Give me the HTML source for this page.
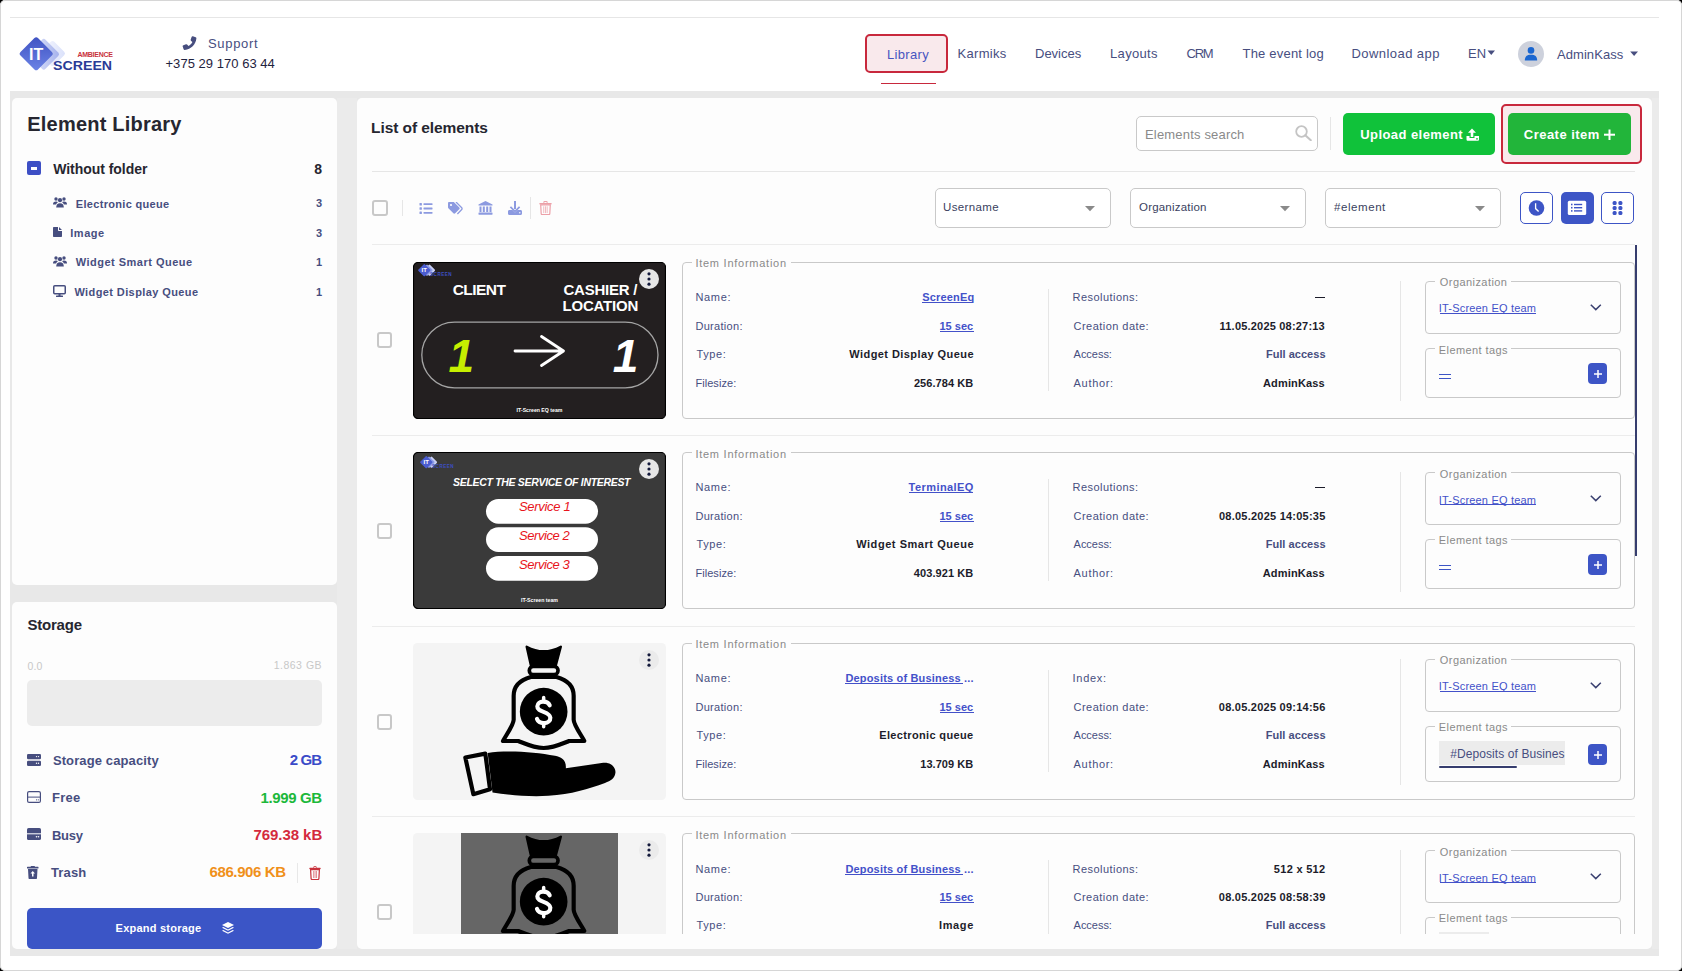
<!DOCTYPE html>
<html><head><meta charset="utf-8"><style>
html,body{margin:0;padding:0;width:1682px;height:971px;overflow:hidden;background:#000;}
#root{position:absolute;left:0;top:0;width:1682px;height:971px;border-radius:5px;background:#fff;overflow:hidden;font-family:"Liberation Sans",sans-serif;}
#frame{position:absolute;left:0;top:0;width:1682px;height:971px;box-sizing:border-box;border:1px solid #d6d6d6;border-radius:5px;z-index:100;}
</style></head><body><div id="root">
<div style='position:absolute;left:10px;top:17px;width:1649px;height:1px;background:#e6e6e6'></div><div style='position:absolute;left:10px;top:91px;width:1649px;height:865px;background:#e8e8e8'></div><div style='position:absolute;left:337px;top:98px;width:20px;height:851px;background:#ebebeb'></div><div style='position:absolute;left:1652px;top:98px;width:7px;height:851px;background:#ebebeb'></div><div style='position:absolute;left:12px;top:98px;width:325px;height:487px;background:#fdfdfd;border-radius:5px'></div><div style='position:absolute;left:12px;top:602px;width:325px;height:347px;background:#fdfdfd;border-radius:5px;overflow:hidden'></div><div style='position:absolute;left:357px;top:98px;width:1295px;height:851px;background:#fdfdfd;border-radius:5px'></div><svg style='position:absolute;left:19px;top:37px;' width='70' height='34' viewBox='0 0 70 34'>
<defs><linearGradient id='lg1' x1='0' y1='0' x2='1' y2='1'><stop offset='0' stop-color='#3f52c2'/><stop offset='1' stop-color='#6c84e6'/></linearGradient><linearGradient id='lg2' x1='1' y1='0' x2='0' y2='1'><stop offset='0' stop-color='#a3b0ec'/><stop offset='1' stop-color='#eef1fc'/></linearGradient><linearGradient id='lg3' x1='1' y1='0' x2='0' y2='1'><stop offset='0' stop-color='#d9e0fa'/><stop offset='1' stop-color='#fbfcff'/></linearGradient></defs>
<rect x='-9.5' y='-9.5' width='19' height='19' rx='2.5' transform='translate(33.5 16.5) rotate(45)' fill='url(#lg3)'/>
<rect x='-11.5' y='-11.5' width='23' height='23' rx='2.5' transform='translate(24.75 17.25) rotate(45)' fill='url(#lg2)'/>
<rect x='-12.35' y='-12.35' width='24.7' height='24.7' rx='2.5' transform='translate(17.2 16.75) rotate(45)' fill='url(#lg1)'/>
</svg><div style='position:absolute;left:29.00px;top:47px;white-space:pre;font:normal 700 16px/16px "Liberation Sans";color:#ffffff;letter-spacing:0.000px;'>IT</div><div style='position:absolute;left:77.50px;top:51px;white-space:pre;font:normal 700 7px/7px "Liberation Sans";color:#c8323c;letter-spacing:-0.286px;'>AMBIENCE</div><div style='position:absolute;left:52.50px;top:60px;white-space:pre;font:normal 700 12.5px/12.5px "Liberation Sans";color:#2a3b96;letter-spacing:0.000px;transform:scaleX(1.1346);transform-origin:0px 0;'>SCREEN</div><svg style='position:absolute;left:182px;top:36px;' width='15' height='14' viewBox='0 0 15 14'><path d='M13.2 1.2 L10.4 0.2 C9.8 0 9.3 0.3 9.1 0.9 L8.2 3.6 C8 4.1 8.2 4.7 8.6 5 L9.9 6 C9.1 7.8 7.7 9.2 5.9 10 L4.9 8.7 C4.6 8.3 4 8.1 3.5 8.3 L0.9 9.2 C0.3 9.4 0 9.9 0.2 10.5 L1.1 13.2 C1.3 13.7 1.8 14 2.3 13.9 C8.5 13.4 13.4 8.5 13.9 2.3 C14 1.8 13.7 1.3 13.2 1.2Z' fill='#474e7f' transform='translate(0.5 0) scale(1 1)'/></svg><div style='position:absolute;left:208.00px;top:37px;white-space:pre;font:normal 400 13px/13px "Liberation Sans";color:#474e7f;letter-spacing:0.667px;'>Support</div><div style='position:absolute;left:165.50px;top:57px;white-space:pre;font:normal 400 13px/13px "Liberation Sans";color:#1f2340;letter-spacing:0.031px;'>+375 29 170 63 44</div><div style='position:absolute;left:865px;top:34px;width:83px;height:39px;box-sizing:border-box;border:2px solid #c8283c;border-radius:5px;background:#f9e9ec'></div><div style='position:absolute;left:887.00px;top:48px;white-space:pre;font:normal 400 13px/13px "Liberation Sans";color:#4855c0;letter-spacing:0.333px;'>Library</div><div style='position:absolute;left:881px;top:83px;width:55px;height:1px;background:#c8283c'></div><div style='position:absolute;left:957.50px;top:47px;white-space:pre;font:normal 400 13px/13px "Liberation Sans";color:#474e7f;letter-spacing:0.300px;'>Karmiks</div><div style='position:absolute;left:1035.00px;top:47px;white-space:pre;font:normal 400 13px/13px "Liberation Sans";color:#474e7f;letter-spacing:0.000px;'>Devices</div><div style='position:absolute;left:1110.00px;top:47px;white-space:pre;font:normal 400 13px/13px "Liberation Sans";color:#474e7f;letter-spacing:0.333px;'>Layouts</div><div style='position:absolute;left:1186.50px;top:47px;white-space:pre;font:normal 400 13px/13px "Liberation Sans";color:#474e7f;letter-spacing:-1.250px;'>CRM</div><div style='position:absolute;left:1242.50px;top:47px;white-space:pre;font:normal 400 13px/13px "Liberation Sans";color:#474e7f;letter-spacing:0.208px;'>The event log</div><div style='position:absolute;left:1351.50px;top:47px;white-space:pre;font:normal 400 13px/13px "Liberation Sans";color:#474e7f;letter-spacing:0.436px;'>Download app</div><div style='position:absolute;left:1468.00px;top:47px;white-space:pre;font:normal 400 13px/13px "Liberation Sans";color:#474e7f;letter-spacing:0.000px;'>EN</div><svg style='position:absolute;left:1487px;top:50px;' width='9' height='6' viewBox='0 0 9 6'><path d='M0.5 0.5 L8 0.5 L4.25 5Z' fill='#474e7f'/></svg><div style='position:absolute;left:1518px;top:41px;width:26px;height:26px;background:#cdd1dc;border-radius:50%'></div><svg style='position:absolute;left:1524px;top:47px;' width='14' height='14' viewBox='0 0 14 14'><circle cx='7' cy='3.4' r='3.3' fill='#1a66d0'/><path d='M0.8 13.6 C0.8 9.5 3 7.8 7 7.8 C11 7.8 13.2 9.5 13.2 13.6Z' fill='#1a66d0'/></svg><div style='position:absolute;left:1557.00px;top:48px;white-space:pre;font:normal 400 13px/13px "Liberation Sans";color:#474e7f;letter-spacing:0.062px;'>AdminKass</div><svg style='position:absolute;left:1630px;top:51px;' width='9' height='6' viewBox='0 0 9 6'><path d='M0.2 0.5 L8 0.5 L4.1 5Z' fill='#474e7f'/></svg><div style='position:absolute;left:27.30px;top:114px;white-space:pre;font:normal 700 20px/20px "Liberation Sans";color:#262630;letter-spacing:0.214px;'>Element Library</div><div style='position:absolute;left:27px;top:161px;width:14px;height:14px;background:#3d4fc5;border-radius:2px'></div><div style='position:absolute;left:31px;top:166.5px;width:6px;height:3px;background:#fff'></div><div style='position:absolute;left:53.20px;top:162px;white-space:pre;font:normal 700 14px/14px "Liberation Sans";color:#262630;letter-spacing:-0.038px;'>Without folder</div><div style='position:absolute;left:314.30px;top:162px;white-space:pre;font:normal 700 14px/14px "Liberation Sans";color:#262630;letter-spacing:0.000px;'>8</div><svg style='position:absolute;left:53px;top:197px;' width='14' height='11' viewBox='0 0 14 11'><g fill='#474e7f'><circle cx='3' cy='2' r='1.7'/><circle cx='11' cy='2' r='1.7'/><circle cx='7' cy='3.2' r='2.1'/><path d='M0 7.4 C0 5.5 1 4.6 3 4.6 C4 4.6 4.6 4.9 5 5.3 C3.8 6 3.2 7 3.2 7.6Z'/><path d='M14 7.4 C14 5.5 13 4.6 11 4.6 C10 4.6 9.4 4.9 9 5.3 C10.2 6 10.8 7 10.8 7.6Z'/><path d='M3.2 10.5 C3.2 7.6 4.6 6.2 7 6.2 C9.4 6.2 10.8 7.6 10.8 10.5Z'/></g></svg><div style='position:absolute;left:75.80px;top:199px;white-space:pre;font:normal 700 11px/11px "Liberation Sans";color:#474e7f;letter-spacing:0.313px;'>Electronic queue</div><div style='position:absolute;left:316.00px;top:198px;white-space:pre;font:normal 700 11px/11px "Liberation Sans";color:#474e7f;letter-spacing:0.000px;'>3</div><svg style='position:absolute;left:53px;top:227px;' width='9' height='10' viewBox='0 0 9 10'><path d='M0 1 C0 0.4 0.4 0 1 0 L5 0 L5 3 C5 3.6 5.4 4 6 4 L9 4 L9 9 C9 9.6 8.6 10 8 10 L1 10 C0.4 10 0 9.6 0 9Z M6 0 L9 3 L6 3Z' fill='#474e7f'/></svg><div style='position:absolute;left:70.30px;top:228px;white-space:pre;font:normal 700 11px/11px "Liberation Sans";color:#474e7f;letter-spacing:0.500px;'>Image</div><div style='position:absolute;left:316.00px;top:228px;white-space:pre;font:normal 700 11px/11px "Liberation Sans";color:#474e7f;letter-spacing:0.000px;'>3</div><svg style='position:absolute;left:53px;top:256px;' width='14' height='11' viewBox='0 0 14 11'><g fill='#474e7f'><circle cx='3' cy='2' r='1.7'/><circle cx='11' cy='2' r='1.7'/><circle cx='7' cy='3.2' r='2.1'/><path d='M0 7.4 C0 5.5 1 4.6 3 4.6 C4 4.6 4.6 4.9 5 5.3 C3.8 6 3.2 7 3.2 7.6Z'/><path d='M14 7.4 C14 5.5 13 4.6 11 4.6 C10 4.6 9.4 4.9 9 5.3 C10.2 6 10.8 7 10.8 7.6Z'/><path d='M3.2 10.5 C3.2 7.6 4.6 6.2 7 6.2 C9.4 6.2 10.8 7.6 10.8 10.5Z'/></g></svg><div style='position:absolute;left:75.80px;top:257px;white-space:pre;font:normal 700 11px/11px "Liberation Sans";color:#474e7f;letter-spacing:0.482px;'>Widget Smart Queue</div><div style='position:absolute;left:316.00px;top:257px;white-space:pre;font:normal 700 11px/11px "Liberation Sans";color:#474e7f;letter-spacing:0.000px;'>1</div><svg style='position:absolute;left:53px;top:285px;' width='13' height='12' viewBox='0 0 13 12'><rect x='0.75' y='0.75' width='11.5' height='8' rx='1' fill='none' stroke='#474e7f' stroke-width='1.5'/><rect x='5.5' y='9' width='2' height='2' fill='#474e7f'/><rect x='3' y='10.5' width='7' height='1.5' rx='0.5' fill='#474e7f'/></svg><div style='position:absolute;left:74.40px;top:287px;white-space:pre;font:normal 700 11px/11px "Liberation Sans";color:#474e7f;letter-spacing:0.400px;'>Widget Display Queue</div><div style='position:absolute;left:316.00px;top:287px;white-space:pre;font:normal 700 11px/11px "Liberation Sans";color:#474e7f;letter-spacing:0.000px;'>1</div><div style='position:absolute;left:27.40px;top:617px;white-space:pre;font:normal 700 15px/15px "Liberation Sans";color:#262630;letter-spacing:-0.200px;'>Storage</div><div style='position:absolute;left:27.40px;top:661px;white-space:pre;font:normal 400 10.5px/10.5px "Liberation Sans";color:#c8c8c8;letter-spacing:0.200px;'>0.0</div><div style='position:absolute;left:273.70px;top:660px;white-space:pre;font:normal 400 10.5px/10.5px "Liberation Sans";color:#c8c8c8;letter-spacing:0.500px;'>1.863 GB</div><div style='position:absolute;left:27px;top:680px;width:295px;height:46px;background:#ececec;border-radius:5px'></div><svg style='position:absolute;left:27px;top:754px;' width='14' height='12' viewBox='0 0 14 12'><rect x='0' y='0' width='14' height='5.3' rx='1.3' fill='#474e7f'/><rect x='0' y='6.7' width='14' height='5.3' rx='1.3' fill='#474e7f'/><circle cx='9.5' cy='2.6' r='0.7' fill='#fff'/><circle cx='11.5' cy='2.6' r='0.7' fill='#fff'/><circle cx='9.5' cy='9.3' r='0.7' fill='#fff'/><circle cx='11.5' cy='9.3' r='0.7' fill='#fff'/></svg><div style='position:absolute;left:52.90px;top:754px;white-space:pre;font:normal 700 13px/13px "Liberation Sans";color:#474e7f;letter-spacing:0.113px;'>Storage capacity</div><div style='position:absolute;left:289.80px;top:752px;white-space:pre;font:normal 700 15px/15px "Liberation Sans";color:#3a4bc8;letter-spacing:-0.933px;'>2 GB</div><svg style='position:absolute;left:27px;top:791px;' width='14' height='12' viewBox='0 0 14 12'><rect x='0.6' y='0.6' width='12.8' height='10.8' rx='1.5' fill='none' stroke='#474e7f' stroke-width='1.2'/><rect x='0.6' y='5.6' width='12.8' height='1' fill='#474e7f'/><circle cx='9.5' cy='8.8' r='0.6' fill='#474e7f'/><circle cx='11.3' cy='8.8' r='0.6' fill='#474e7f'/></svg><div style='position:absolute;left:52.00px;top:791px;white-space:pre;font:normal 700 13px/13px "Liberation Sans";color:#474e7f;letter-spacing:0.267px;'>Free</div><div style='position:absolute;left:260.40px;top:790px;white-space:pre;font:normal 700 15px/15px "Liberation Sans";color:#1cb83a;letter-spacing:-0.343px;'>1.999 GB</div><svg style='position:absolute;left:27px;top:828px;' width='14' height='12' viewBox='0 0 14 12'><rect x='0' y='0' width='14' height='12' rx='1.6' fill='#474e7f'/><rect x='0' y='5.3' width='14' height='1' fill='#fff'/><circle cx='9.5' cy='8.8' r='0.8' fill='#fff'/><circle cx='11.5' cy='8.8' r='0.8' fill='#fff'/></svg><div style='position:absolute;left:52.00px;top:829px;white-space:pre;font:normal 700 13px/13px "Liberation Sans";color:#474e7f;letter-spacing:-0.300px;'>Busy</div><div style='position:absolute;left:253.50px;top:827px;white-space:pre;font:normal 700 15px/15px "Liberation Sans";color:#d42a3c;letter-spacing:-0.062px;'>769.38 kB</div><svg style='position:absolute;left:27px;top:866px;' width='12' height='13' viewBox='0 0 12 13'><rect x='0' y='0.8' width='11.5' height='1.6' rx='0.5' fill='#474e7f'/><rect x='3.8' y='0' width='4' height='1.2' fill='#474e7f'/><path d='M1 3 L10.5 3 L10 12 C10 12.6 9.6 13 9 13 L2.5 13 C1.9 13 1.5 12.6 1.5 12Z' fill='#474e7f'/><path d='M5.75 5 L8 7.5 L6.5 7.5 L6.5 10.5 L5 10.5 L5 7.5 L3.5 7.5Z' fill='#fff'/></svg><div style='position:absolute;left:51.00px;top:866px;white-space:pre;font:normal 700 13px/13px "Liberation Sans";color:#474e7f;letter-spacing:0.150px;'>Trash</div><div style='position:absolute;left:209.50px;top:864px;white-space:pre;font:normal 700 15px/15px "Liberation Sans";color:#f0901a;letter-spacing:-0.389px;'>686.906 KB</div><div style='position:absolute;left:297px;top:863px;width:1px;height:20px;background:#e8e8e8'></div><svg style='position:absolute;left:309px;top:866px;' width='12' height='14' viewBox='0 0 12 14'><path d='M4.5 1.5 C4.5 0.8 5 0.5 5.5 0.5 L6.5 0.5 C7 0.5 7.5 0.8 7.5 1.5' fill='none' stroke='#c8323c' stroke-width='1'/><rect x='0.3' y='1.8' width='11.4' height='1.4' rx='0.6' fill='#c8323c'/><path d='M1.6 3.6 L10.4 3.6 L9.9 12.6 C9.85 13.2 9.4 13.5 8.9 13.5 L3.1 13.5 C2.6 13.5 2.15 13.2 2.1 12.6Z' fill='none' stroke='#c8323c' stroke-width='1.2'/><rect x='4.2' y='5' width='0.9' height='7' fill='#e08890'/><rect x='5.6' y='5' width='0.9' height='7' fill='#e08890'/><rect x='7' y='5' width='0.9' height='7' fill='#e08890'/></svg><div style='position:absolute;left:27px;top:908px;width:295px;height:41px;background:#3b55c6;border-radius:5px'></div><div style='position:absolute;left:115.60px;top:923px;white-space:pre;font:normal 700 11px/11px "Liberation Sans";color:#ffffff;letter-spacing:0.231px;'>Expand storage</div><svg style='position:absolute;left:222px;top:922px;' width='12' height='12' viewBox='0 0 12 12'><path d='M6 0 L12 3 L6 6 L0 3Z' fill='#fff'/><path d='M1.3 5 L6 7.4 L10.7 5 L12 5.8 L6 8.8 L0 5.8Z' fill='#fff'/><path d='M1.3 8 L6 10.4 L10.7 8 L12 8.8 L6 11.8 L0 8.8Z' fill='#fff'/></svg><div style='position:absolute;left:371.10px;top:120px;white-space:pre;font:normal 700 15.5px/15.5px "Liberation Sans";color:#262630;letter-spacing:-0.080px;'>List of elements</div><div style='position:absolute;left:372px;top:171px;width:1263px;height:1px;background:#e6e6e6'></div><div style='position:absolute;left:1136px;top:116px;width:182px;height:35px;box-sizing:border-box;border:1px solid #c9c9c9;border-radius:5px;background:#fff'></div><div style='position:absolute;left:1145.00px;top:128px;white-space:pre;font:normal 400 13px/13px "Liberation Sans";color:#8a8a8a;letter-spacing:0.179px;'>Elements search</div><svg style='position:absolute;left:1295px;top:125px;' width='17' height='16' viewBox='0 0 17 16'><circle cx='6.5' cy='6.5' r='5.3' fill='none' stroke='#c4c4c4' stroke-width='1.8'/><path d='M10.3 10.3 L15.8 15.3' stroke='#c4c4c4' stroke-width='2' stroke-linecap='round'/></svg><div style='position:absolute;left:1330px;top:117px;width:1px;height:33px;background:#e6e6e6'></div><div style='position:absolute;left:1343px;top:113px;width:152px;height:42px;background:#10c23a;border-radius:5px'></div><div style='position:absolute;left:1360.20px;top:128px;white-space:pre;font:normal 700 13px/13px "Liberation Sans";color:#ffffff;letter-spacing:0.438px;'>Upload element</div><svg style='position:absolute;left:1466px;top:128px;' width='14' height='13' viewBox='0 0 14 13'><path d='M6 0.5 L10 4.8 L7.3 4.8 L7.3 9 L4.7 9 L4.7 4.8 L2 4.8Z' fill='#fff'/><path d='M0.5 8 L3.5 8 L3.5 10 L8.5 10 L8.5 8 L13 8 L13 11.5 C13 12.3 12.4 12.8 11.7 12.8 L1.8 12.8 C1.1 12.8 0.5 12.3 0.5 11.5Z' fill='#fff'/><circle cx='11' cy='10.8' r='0.9' fill='#10c23a'/></svg><div style='position:absolute;left:1501px;top:104px;width:141px;height:60px;box-sizing:border-box;border:2px solid #c8283c;border-radius:5px;background:#f9e9ec'></div><div style='position:absolute;left:1508px;top:113px;width:123px;height:42px;background:#22b53a;border-radius:5px'></div><div style='position:absolute;left:1523.80px;top:128px;white-space:pre;font:normal 700 13px/13px "Liberation Sans";color:#ffffff;letter-spacing:0.470px;'>Create item</div><svg style='position:absolute;left:1604px;top:129px;' width='11' height='11' viewBox='0 0 11 11'><rect x='4.5' y='0.5' width='2' height='10.5' fill='#fff'/><rect x='0' y='4.7' width='11' height='2' fill='#fff'/></svg><div style='position:absolute;left:372px;top:200px;width:15.5px;height:15.5px;box-sizing:border-box;border:2px solid #c8c8c8;border-radius:3px'></div><div style='position:absolute;left:402px;top:200px;width:1px;height:16px;background:#e6e6e6'></div><svg style='position:absolute;left:419px;top:203px;' width='14' height='11' viewBox='0 0 14 11'><g fill='#8c9ae0'><rect x='0.5' y='0' width='2.4' height='2.4' rx='0.5'/><rect x='0.5' y='4.3' width='2.4' height='2.4' rx='0.5'/><rect x='0.5' y='8.6' width='2.4' height='2.4' rx='0.5'/><rect x='4.5' y='0.3' width='9' height='1.8' rx='0.4'/><rect x='4.5' y='4.6' width='9' height='1.8' rx='0.4'/><rect x='4.5' y='8.9' width='9' height='1.8' rx='0.4'/></g></svg><svg style='position:absolute;left:448px;top:202px;' width='15' height='13' viewBox='0 0 15 13'><path d='M0 1.2 C0 0.5 0.5 0 1.2 0 L5.3 0 C5.7 0 6 0.1 6.3 0.4 L11.3 5.4 C11.8 5.9 11.8 6.7 11.3 7.2 L7.2 11.3 C6.7 11.8 5.9 11.8 5.4 11.3 L0.4 6.3 C0.1 6 0 5.7 0 5.3Z' fill='#8c9ae0'/><circle cx='3' cy='3' r='1.1' fill='#fff'/><path d='M8 0 L13.5 5.5 C14.3 6.3 14.3 7 13.5 7.8 L9.4 12' fill='none' stroke='#8c9ae0' stroke-width='1.3'/></svg><svg style='position:absolute;left:478px;top:201px;' width='15' height='14' viewBox='0 0 15 14'><g fill='#8c9ae0'><path d='M7.5 0 L14.5 3.5 L14.5 4.5 L0.5 4.5 L0.5 3.5Z'/><rect x='1.5' y='5.5' width='2' height='5.5'/><rect x='4.8' y='5.5' width='2' height='5.5'/><rect x='8.2' y='5.5' width='2' height='5.5'/><rect x='11.5' y='5.5' width='2' height='5.5'/><rect x='0.5' y='11.5' width='14' height='2.2' rx='0.4'/></g></svg><svg style='position:absolute;left:508px;top:201px;' width='14' height='14' viewBox='0 0 14 14'><g fill='#8c9ae0'><rect x='6' y='0' width='2' height='8'/><path d='M3 5.3 L7 9.3 L11 5.3 L12.2 6.5 L7 11.5 L1.8 6.5Z'/><path d='M0 10.5 C0 9.7 0.6 9 1.4 9 L4.5 9 L7 11.5 L9.5 9 L12.6 9 C13.4 9 14 9.7 14 10.5 L14 12.5 C14 13.3 13.4 14 12.6 14 L1.4 14 C0.6 14 0 13.3 0 12.5Z'/></g><circle cx='11.8' cy='11.8' r='0.7' fill='#fff'/></svg><div style='position:absolute;left:530px;top:197px;width:1px;height:22px;background:#e6e6e6'></div><svg style='position:absolute;left:539px;top:201px;' width='13' height='14' viewBox='0 0 13 14'><path d='M4.7 1.8 C4.7 0.9 5.3 0.5 6 0.5 L7 0.5 C7.7 0.5 8.3 0.9 8.3 1.8' fill='none' stroke='#eca0a8' stroke-width='1.1'/><rect x='0.3' y='1.9' width='12.4' height='1.5' rx='0.6' fill='#eca0a8'/><path d='M1.7 3.8 L11.3 3.8 L10.8 12.8 C10.75 13.4 10.3 13.6 9.8 13.6 L3.2 13.6 C2.7 13.6 2.25 13.4 2.2 12.8Z' fill='none' stroke='#eca0a8' stroke-width='1.2'/><g fill='#f0b4ba'><rect x='4.3' y='5.3' width='0.9' height='6.8'/><rect x='6' y='5.3' width='0.9' height='6.8'/><rect x='7.7' y='5.3' width='0.9' height='6.8'/></g></svg><div style='position:absolute;left:935px;top:188px;width:176px;height:40px;box-sizing:border-box;border:1px solid #c9c9c9;border-radius:5px;background:#fff'></div><div style='position:absolute;left:943.00px;top:202px;white-space:pre;font:normal 400 11.5px/11.5px "Liberation Sans";color:#3a3f60;letter-spacing:0.357px;'>Username</div><svg style='position:absolute;left:1085px;top:206px;' width='10' height='6' viewBox='0 0 10 6'><path d='M0 0 L10 0 L5 5.3Z' fill='#8a8a8a'/></svg><div style='position:absolute;left:1130px;top:188px;width:176px;height:40px;box-sizing:border-box;border:1px solid #c9c9c9;border-radius:5px;background:#fff'></div><div style='position:absolute;left:1139.00px;top:202px;white-space:pre;font:normal 400 11.5px/11.5px "Liberation Sans";color:#3a3f60;letter-spacing:0.200px;'>Organization</div><svg style='position:absolute;left:1280px;top:206px;' width='10' height='6' viewBox='0 0 10 6'><path d='M0 0 L10 0 L5 5.3Z' fill='#8a8a8a'/></svg><div style='position:absolute;left:1325px;top:188px;width:176px;height:40px;box-sizing:border-box;border:1px solid #c9c9c9;border-radius:5px;background:#fff'></div><div style='position:absolute;left:1334.00px;top:202px;white-space:pre;font:normal 400 11.5px/11.5px "Liberation Sans";color:#3a3f60;letter-spacing:0.571px;'>#element</div><svg style='position:absolute;left:1475px;top:206px;' width='10' height='6' viewBox='0 0 10 6'><path d='M0 0 L10 0 L5 5.3Z' fill='#8a8a8a'/></svg><div style='position:absolute;left:1520px;top:192px;width:33px;height:32px;box-sizing:border-box;border:1px solid #3d55c6;border-radius:5px;background:#fff'></div><svg style='position:absolute;left:1528px;top:200px;' width='17' height='17' viewBox='0 0 17 17'><circle cx='8.5' cy='8' r='7.8' fill='#3d55c6'/><path d='M7.6 3.3 L7.6 8.6 L10.6 11.4' fill='none' stroke='#fff' stroke-width='1.3'/></svg><div style='position:absolute;left:1561px;top:192px;width:33px;height:32px;background:#3d55c6;border-radius:5px'></div><svg style='position:absolute;left:1567px;top:200px;' width='20' height='16' viewBox='0 0 20 16'><rect x='0.8' y='0.8' width='18.4' height='14.2' rx='1.6' fill='#fff'/><g fill='#3d55c6'><rect x='4' y='3.7' width='1.5' height='1.6'/><rect x='4' y='6.9' width='1.5' height='1.6'/><rect x='4' y='10.1' width='1.5' height='1.6'/><rect x='7' y='3.8' width='8.2' height='1.4'/><rect x='7' y='7' width='8.2' height='1.4'/><rect x='7' y='10.2' width='8.2' height='1.4'/></g></svg><div style='position:absolute;left:1601px;top:192px;width:33px;height:32px;box-sizing:border-box;border:1px solid #3d55c6;border-radius:5px;background:#fff'></div><svg style='position:absolute;left:1612px;top:200px;' width='12' height='16' viewBox='0 0 12 16'><g fill='#3d55c6'><rect x='0.6' y='0.9' width='4' height='4' rx='1.5'/><rect x='6.4' y='0.9' width='4' height='4' rx='1.5'/><rect x='0.6' y='5.9' width='4' height='4' rx='1.5'/><rect x='6.4' y='5.9' width='4' height='4' rx='1.5'/><rect x='0.6' y='10.9' width='4' height='4' rx='1.5'/><rect x='6.4' y='10.9' width='4' height='4' rx='1.5'/></g></svg><div style='position:absolute;left:372px;top:244px;width:1263px;height:1px;background:#ececec'></div><div style='position:absolute;left:1635px;top:245px;width:2px;height:311px;background:#363d6e'></div><div style='position:absolute;left:0;top:0;width:1682px;height:971px;clip-path:inset(244px 0 37px 0)'><svg style='position:absolute;left:413px;top:262px;' width='253' height='157' viewBox='0 0 253 157'><rect x='0.5' y='0.5' width='252' height='156' rx='4.5' fill='#231f20' stroke='#000' stroke-width='1.2'/>
<rect x='8.8' y='60.2' width='236.2' height='65.6' rx='32.8' fill='none' stroke='#a5a5a5' stroke-width='1.3'/>
<path d='M102 89 L150 89 M128.5 74.5 L150.5 89 L128.5 103.5' fill='none' stroke='#fff' stroke-width='2.8' stroke-linecap='round' stroke-linejoin='round'/>
<text x='126.5' y='150' text-anchor='middle' font-family='Liberation Sans' font-weight='700' font-size='5.2' fill='#fff'>IT-Screen EQ team</text></svg><svg style='position:absolute;left:418px;top:264px;' width='36' height='13' viewBox='0 0 36 13'><rect x='-4.2' y='-4.2' width='8.4' height='8.4' rx='1' transform='translate(11.5 6.2) rotate(45)' fill='#c9d0f5'/><rect x='-4.2' y='-4.2' width='8.4' height='8.4' rx='1' transform='translate(9 6.2) rotate(45)' fill='#8d9ce6'/><rect x='-4.6' y='-4.6' width='9.2' height='9.2' rx='1' transform='translate(6.3 6.2) rotate(45)' fill='#4a5cd0'/><text x='3.6' y='8.2' font-family='Liberation Sans' font-weight='700' font-size='6' fill='#fff'>IT</text><text x='12' y='11.5' font-family='Liberation Sans' font-weight='700' font-size='4.6' fill='#3d4fc0' letter-spacing='0.5'>SCREEN</text></svg><div style='position:absolute;left:452.70px;top:282px;white-space:pre;font:normal 700 15.5px/15.5px "Liberation Sans";color:#ffffff;letter-spacing:-0.560px;'>CLIENT</div><div style='position:absolute;left:563.50px;top:282px;white-space:pre;font:normal 700 15px/15px "Liberation Sans";color:#ffffff;letter-spacing:-0.238px;'>CASHIER /</div><div style='position:absolute;left:562.50px;top:298px;white-space:pre;font:normal 700 15px/15px "Liberation Sans";color:#ffffff;letter-spacing:-0.214px;'>LOCATION</div><div style='position:absolute;left:448.60px;top:333px;white-space:pre;font:italic 700 46px/46px "Liberation Sans";color:#c6ef00;letter-spacing:0.000px;'>1</div><div style='position:absolute;left:612.70px;top:333px;white-space:pre;font:italic 700 46px/46px "Liberation Sans";color:#ffffff;letter-spacing:0.000px;'>1</div><svg style='position:absolute;left:639px;top:268.7px;' width='20' height='20' viewBox='0 0 20 20'><circle cx='10' cy='10' r='10' fill='#e6e6e6'/><g fill='#141a3c'><circle cx='10' cy='4.8' r='1.6'/><circle cx='10' cy='10' r='1.6'/><circle cx='10' cy='15.2' r='1.6'/></g></svg><svg style='position:absolute;left:413px;top:452px;' width='253' height='157' viewBox='0 0 253 157'><rect x='0.5' y='0.5' width='252' height='156' rx='4.5' fill='#3a3a3a' stroke='#000' stroke-width='1.2'/>
<rect x='73' y='47' width='112' height='24.7' rx='12.35' fill='#fff'/>
<rect x='73' y='75.2' width='112' height='24.7' rx='12.35' fill='#fff'/>
<rect x='73' y='104' width='112' height='24.7' rx='12.35' fill='#fff'/>
<text x='126.5' y='150' text-anchor='middle' font-family='Liberation Sans' font-weight='700' font-size='5.2' fill='#fff'>IT-Screen team</text></svg><svg style='position:absolute;left:420px;top:456px;' width='36' height='13' viewBox='0 0 36 13'><rect x='-4.2' y='-4.2' width='8.4' height='8.4' rx='1' transform='translate(11.5 6.2) rotate(45)' fill='#c9d0f5'/><rect x='-4.2' y='-4.2' width='8.4' height='8.4' rx='1' transform='translate(9 6.2) rotate(45)' fill='#8d9ce6'/><rect x='-4.6' y='-4.6' width='9.2' height='9.2' rx='1' transform='translate(6.3 6.2) rotate(45)' fill='#4a5cd0'/><text x='3.6' y='8.2' font-family='Liberation Sans' font-weight='700' font-size='6' fill='#fff'>IT</text><text x='12' y='11.5' font-family='Liberation Sans' font-weight='700' font-size='4.6' fill='#3d4fc0' letter-spacing='0.5'>SCREEN</text></svg><div style='position:absolute;left:453.10px;top:477px;white-space:pre;font:italic 700 10.5px/10.5px "Liberation Sans";color:#ffffff;letter-spacing:-0.321px;'>SELECT THE SERVICE OF INTEREST</div><div style='position:absolute;left:519.00px;top:500px;white-space:pre;font:italic 400 13px/13px "Liberation Sans";color:#e8141c;letter-spacing:-0.300px;'>Service 1</div><div style='position:absolute;left:519.00px;top:529px;white-space:pre;font:italic 400 13px/13px "Liberation Sans";color:#e8141c;letter-spacing:-0.425px;'>Service 2</div><div style='position:absolute;left:519.00px;top:558px;white-space:pre;font:italic 400 13px/13px "Liberation Sans";color:#e8141c;letter-spacing:-0.425px;'>Service 3</div><svg style='position:absolute;left:639px;top:458.7px;' width='20' height='20' viewBox='0 0 20 20'><circle cx='10' cy='10' r='10' fill='#e6e6e6'/><g fill='#141a3c'><circle cx='10' cy='4.8' r='1.6'/><circle cx='10' cy='10' r='1.6'/><circle cx='10' cy='15.2' r='1.6'/></g></svg><svg style='position:absolute;left:413px;top:643px;' width='253' height='157' viewBox='0 0 253 157'><rect x='0' y='0' width='253' height='157' rx='4.5' fill='#f4f4f4'/><g transform='translate(42 -3) scale(0.166667)'>
<path d='M430 40 Q532 95 635 40 L605 152 L455 152Z' fill='#000' stroke='#000' stroke-width='14' stroke-linejoin='round'/>
<rect x='446' y='158' width='172' height='50' rx='24' fill='none' stroke='#000' stroke-width='22'/>
<path d='M455 222 C390 240 352 280 352 335 L352 478 C352 510 300 580 288 606 L380 606 C440 630 480 648 532 648 C584 648 624 630 684 606 L776 606 C764 580 712 510 712 478 L712 335 C712 280 674 240 609 222Z' fill='none' stroke='#000' stroke-width='25' stroke-linejoin='round'/>
<circle cx='532' cy='430' r='143' fill='#000'/>
<path d='M568 392 C556 362 496 360 494 398 C492 436 570 426 572 466 C574 506 506 510 492 474' fill='none' stroke='#fff' stroke-width='25' stroke-linecap='round'/>
<path d='M532 345 L532 362 M532 505 L532 520' stroke='#fff' stroke-width='21' stroke-linecap='round'/>
<path d='M62 705 L182 682 L210 895 L110 925Z' fill='none' stroke='#000' stroke-width='25' stroke-linejoin='round'/>
<path d='M196 678 C300 660 480 670 600 695 C650 705 668 730 665 770 L880 738 C940 728 968 770 962 800 C958 830 935 845 900 858 C800 895 700 925 560 935 C440 942 320 930 225 915Z' fill='#000'/>
</g></svg><svg style='position:absolute;left:639px;top:649.5px;' width='20' height='20' viewBox='0 0 20 20'><circle cx='10' cy='10' r='10' fill='#ebebeb'/><g fill='#141a3c'><circle cx='10' cy='4.8' r='1.6'/><circle cx='10' cy='10' r='1.6'/><circle cx='10' cy='15.2' r='1.6'/></g></svg><svg style='position:absolute;left:413px;top:833px;' width='253' height='157' viewBox='0 0 253 157'><rect x='0' y='0' width='253' height='157' rx='4.5' fill='#f4f4f4'/><rect x='48' y='0' width='157' height='157' fill='#666'/><g transform='translate(42 -3) scale(0.166667)'>
<path d='M430 40 Q532 95 635 40 L605 152 L455 152Z' fill='#000' stroke='#000' stroke-width='14' stroke-linejoin='round'/>
<rect x='446' y='158' width='172' height='50' rx='24' fill='none' stroke='#000' stroke-width='22'/>
<path d='M455 222 C390 240 352 280 352 335 L352 478 C352 510 300 580 288 606 L380 606 C440 630 480 648 532 648 C584 648 624 630 684 606 L776 606 C764 580 712 510 712 478 L712 335 C712 280 674 240 609 222Z' fill='none' stroke='#000' stroke-width='25' stroke-linejoin='round'/>
<circle cx='532' cy='430' r='143' fill='#000'/>
<path d='M568 392 C556 362 496 360 494 398 C492 436 570 426 572 466 C574 506 506 510 492 474' fill='none' stroke='#fff' stroke-width='25' stroke-linecap='round'/>
<path d='M532 345 L532 362 M532 505 L532 520' stroke='#fff' stroke-width='21' stroke-linecap='round'/>
<path d='M62 705 L182 682 L210 895 L110 925Z' fill='none' stroke='#000' stroke-width='25' stroke-linejoin='round'/>
<path d='M196 678 C300 660 480 670 600 695 C650 705 668 730 665 770 L880 738 C940 728 968 770 962 800 C958 830 935 845 900 858 C800 895 700 925 560 935 C440 942 320 930 225 915Z' fill='#000'/>
</g></svg><svg style='position:absolute;left:639px;top:839.5px;' width='20' height='20' viewBox='0 0 20 20'><circle cx='10' cy='10' r='10' fill='#ebebeb'/><g fill='#141a3c'><circle cx='10' cy='4.8' r='1.6'/><circle cx='10' cy='10' r='1.6'/><circle cx='10' cy='15.2' r='1.6'/></g></svg><div style='position:absolute;left:372px;top:244px;width:1263px;height:1px;background:#ececec'></div><div style='position:absolute;left:376.5px;top:332px;width:15.5px;height:15.5px;box-sizing:border-box;border:2px solid #c8c8c8;border-radius:3px'></div><div style='position:absolute;left:682px;top:262px;width:953px;height:157px;box-sizing:border-box;border:1px solid #c9c9c9;border-radius:4px'></div><div style='position:absolute;left:691.5px;top:261px;width:99.0px;height:3px;background:#fdfdfd'></div><div style='position:absolute;left:695.40px;top:258px;white-space:pre;font:normal 400 11px/11px "Liberation Sans";color:#8a8a8a;letter-spacing:0.747px;'>Item Information</div><div style='position:absolute;left:695.40px;top:292px;white-space:pre;font:normal 400 11px/11px "Liberation Sans";color:#474e7f;letter-spacing:0.700px;'>Name:</div><div style='position:absolute;left:695.40px;top:321px;white-space:pre;font:normal 400 11px/11px "Liberation Sans";color:#474e7f;letter-spacing:0.312px;'>Duration:</div><div style='position:absolute;left:696.40px;top:349px;white-space:pre;font:normal 400 11px/11px "Liberation Sans";color:#474e7f;letter-spacing:0.625px;'>Type:</div><div style='position:absolute;left:695.40px;top:378px;white-space:pre;font:normal 400 11px/11px "Liberation Sans";color:#474e7f;letter-spacing:0.062px;'>Filesize:</div><div style='position:absolute;left:922.20px;top:292px;white-space:pre;font:normal 700 11px/11px "Liberation Sans";color:#4351c9;letter-spacing:0.186px;'>ScreenEq</div><div style='position:absolute;left:922.2px;top:302.2px;width:51.3px;height:1px;background:#4351c9'></div><div style='position:absolute;left:939.50px;top:321px;white-space:pre;font:normal 700 11px/11px "Liberation Sans";color:#4351c9;letter-spacing:0.000px;'>15 sec</div><div style='position:absolute;left:939.5px;top:331.0px;width:34px;height:1px;background:#4351c9'></div><div style='position:absolute;left:849.30px;top:349px;white-space:pre;font:normal 700 11px/11px "Liberation Sans";color:#1c1c2a;letter-spacing:0.432px;'>Widget Display Queue</div><div style='position:absolute;left:913.90px;top:378px;white-space:pre;font:normal 700 11px/11px "Liberation Sans";color:#1c1c2a;letter-spacing:0.067px;'>256.784 KB</div><div style='position:absolute;left:1048px;top:288.9px;width:1px;height:102px;background:#e6e6e6'></div><div style='position:absolute;left:1072.60px;top:292px;white-space:pre;font:normal 400 11px/11px "Liberation Sans";color:#474e7f;letter-spacing:0.455px;'>Resolutions:</div><div style='position:absolute;left:1073.60px;top:321px;white-space:pre;font:normal 400 11px/11px "Liberation Sans";color:#474e7f;letter-spacing:0.454px;'>Creation date:</div><div style='position:absolute;left:1073.60px;top:349px;white-space:pre;font:normal 400 11px/11px "Liberation Sans";color:#474e7f;letter-spacing:-0.033px;'>Access:</div><div style='position:absolute;left:1073.60px;top:378px;white-space:pre;font:normal 400 11px/11px "Liberation Sans";color:#474e7f;letter-spacing:0.683px;'>Author:</div><div style='position:absolute;left:1314.5px;top:296.8px;width:10.5px;height:1.5px;background:#1c1c2a'></div><div style='position:absolute;left:1219.60px;top:321px;white-space:pre;font:normal 700 11px/11px "Liberation Sans";color:#1c1c2a;letter-spacing:0.200px;'>11.05.2025 08:27:13</div><div style='position:absolute;left:1266.00px;top:349px;white-space:pre;font:normal 700 11px/11px "Liberation Sans";color:#474e7f;letter-spacing:0.020px;'>Full access</div><div style='position:absolute;left:1263.00px;top:378px;white-space:pre;font:normal 700 11px/11px "Liberation Sans";color:#1c1c2a;letter-spacing:0.150px;'>AdminKass</div><div style='position:absolute;left:1400px;top:281.0px;width:1px;height:120px;background:#e6e6e6'></div><div style='position:absolute;left:1425px;top:281px;width:196px;height:53px;box-sizing:border-box;border:1px solid #c9c9c9;border-radius:4px'></div><div style='position:absolute;left:1435px;top:280px;width:76px;height:3px;background:#fdfdfd'></div><div style='position:absolute;left:1439.80px;top:277px;white-space:pre;font:normal 400 11px/11px "Liberation Sans";color:#8a8a8a;letter-spacing:0.436px;'>Organization</div><div style='position:absolute;left:1438.80px;top:303px;white-space:pre;font:normal 400 11px/11px "Liberation Sans";color:#4351c9;letter-spacing:0.188px;'>IT-Screen EQ team</div><div style='position:absolute;left:1439.8px;top:313.0px;width:96px;height:1px;background:#4351c9'></div><svg style='position:absolute;left:1589.5px;top:304.0px;' width='12' height='7' viewBox='0 0 12 7'><path d='M0.8 0.8 L5.8 5.6 L10.8 0.8' fill='none' stroke='#3a4070' stroke-width='1.5'/></svg><div style='position:absolute;left:1425px;top:348px;width:196px;height:50px;box-sizing:border-box;border:1px solid #c9c9c9;border-radius:4px'></div><div style='position:absolute;left:1435px;top:347px;width:76px;height:3px;background:#fdfdfd'></div><div style='position:absolute;left:1438.80px;top:345px;white-space:pre;font:normal 400 11px/11px "Liberation Sans";color:#8a8a8a;letter-spacing:0.409px;'>Element tags</div><div style='position:absolute;left:1439.2px;top:374.0px;width:11.6px;height:1.2px;background:#3d55c6'></div><div style='position:absolute;left:1439.2px;top:378.3px;width:11.6px;height:1.2px;background:#3d55c6'></div><div style='position:absolute;left:1588px;top:362.9px;width:19px;height:21px;background:#3d55c6;border-radius:4px'></div><svg style='position:absolute;left:1592.5px;top:368.9px;' width='10' height='10' viewBox='0 0 10 10'><rect x='4.25' y='1' width='1.5' height='8' fill='#fff'/><rect x='1' y='4.25' width='8' height='1.5' fill='#fff'/></svg><div style='position:absolute;left:372px;top:435px;width:1263px;height:1px;background:#ececec'></div><div style='position:absolute;left:376.5px;top:523px;width:15.5px;height:15.5px;box-sizing:border-box;border:2px solid #c8c8c8;border-radius:3px'></div><div style='position:absolute;left:682px;top:452px;width:953px;height:157px;box-sizing:border-box;border:1px solid #c9c9c9;border-radius:4px'></div><div style='position:absolute;left:691.5px;top:451px;width:99.0px;height:3px;background:#fdfdfd'></div><div style='position:absolute;left:695.40px;top:449px;white-space:pre;font:normal 400 11px/11px "Liberation Sans";color:#8a8a8a;letter-spacing:0.747px;'>Item Information</div><div style='position:absolute;left:695.40px;top:482px;white-space:pre;font:normal 400 11px/11px "Liberation Sans";color:#474e7f;letter-spacing:0.700px;'>Name:</div><div style='position:absolute;left:695.40px;top:511px;white-space:pre;font:normal 400 11px/11px "Liberation Sans";color:#474e7f;letter-spacing:0.312px;'>Duration:</div><div style='position:absolute;left:696.40px;top:539px;white-space:pre;font:normal 400 11px/11px "Liberation Sans";color:#474e7f;letter-spacing:0.625px;'>Type:</div><div style='position:absolute;left:695.40px;top:568px;white-space:pre;font:normal 400 11px/11px "Liberation Sans";color:#474e7f;letter-spacing:0.062px;'>Filesize:</div><div style='position:absolute;left:908.60px;top:482px;white-space:pre;font:normal 700 11px/11px "Liberation Sans";color:#4351c9;letter-spacing:0.433px;'>TerminalEQ</div><div style='position:absolute;left:908.6px;top:492.3px;width:64.9px;height:1px;background:#4351c9'></div><div style='position:absolute;left:939.50px;top:511px;white-space:pre;font:normal 700 11px/11px "Liberation Sans";color:#4351c9;letter-spacing:0.000px;'>15 sec</div><div style='position:absolute;left:939.5px;top:521.1px;width:34px;height:1px;background:#4351c9'></div><div style='position:absolute;left:856.20px;top:539px;white-space:pre;font:normal 700 11px/11px "Liberation Sans";color:#1c1c2a;letter-spacing:0.547px;'>Widget Smart Queue</div><div style='position:absolute;left:913.80px;top:568px;white-space:pre;font:normal 700 11px/11px "Liberation Sans";color:#1c1c2a;letter-spacing:0.078px;'>403.921 KB</div><div style='position:absolute;left:1048px;top:479.0px;width:1px;height:102px;background:#e6e6e6'></div><div style='position:absolute;left:1072.60px;top:482px;white-space:pre;font:normal 400 11px/11px "Liberation Sans";color:#474e7f;letter-spacing:0.455px;'>Resolutions:</div><div style='position:absolute;left:1073.60px;top:511px;white-space:pre;font:normal 400 11px/11px "Liberation Sans";color:#474e7f;letter-spacing:0.454px;'>Creation date:</div><div style='position:absolute;left:1073.60px;top:539px;white-space:pre;font:normal 400 11px/11px "Liberation Sans";color:#474e7f;letter-spacing:-0.033px;'>Access:</div><div style='position:absolute;left:1073.60px;top:568px;white-space:pre;font:normal 400 11px/11px "Liberation Sans";color:#474e7f;letter-spacing:0.683px;'>Author:</div><div style='position:absolute;left:1314.5px;top:486.90000000000003px;width:10.5px;height:1.5px;background:#1c1c2a'></div><div style='position:absolute;left:1219.00px;top:511px;white-space:pre;font:normal 700 11px/11px "Liberation Sans";color:#1c1c2a;letter-spacing:0.233px;'>08.05.2025 14:05:35</div><div style='position:absolute;left:1265.70px;top:539px;white-space:pre;font:normal 700 11px/11px "Liberation Sans";color:#474e7f;letter-spacing:0.050px;'>Full access</div><div style='position:absolute;left:1262.70px;top:568px;white-space:pre;font:normal 700 11px/11px "Liberation Sans";color:#1c1c2a;letter-spacing:0.188px;'>AdminKass</div><div style='position:absolute;left:1400px;top:472.0px;width:1px;height:120px;background:#e6e6e6'></div><div style='position:absolute;left:1425px;top:472px;width:196px;height:53px;box-sizing:border-box;border:1px solid #c9c9c9;border-radius:4px'></div><div style='position:absolute;left:1435px;top:471px;width:76px;height:3px;background:#fdfdfd'></div><div style='position:absolute;left:1439.80px;top:469px;white-space:pre;font:normal 400 11px/11px "Liberation Sans";color:#8a8a8a;letter-spacing:0.436px;'>Organization</div><div style='position:absolute;left:1438.80px;top:495px;white-space:pre;font:normal 400 11px/11px "Liberation Sans";color:#4351c9;letter-spacing:0.188px;'>IT-Screen EQ team</div><div style='position:absolute;left:1439.8px;top:504.0px;width:96px;height:1px;background:#4351c9'></div><svg style='position:absolute;left:1589.5px;top:495.0px;' width='12' height='7' viewBox='0 0 12 7'><path d='M0.8 0.8 L5.8 5.6 L10.8 0.8' fill='none' stroke='#3a4070' stroke-width='1.5'/></svg><div style='position:absolute;left:1425px;top:539px;width:196px;height:50px;box-sizing:border-box;border:1px solid #c9c9c9;border-radius:4px'></div><div style='position:absolute;left:1435px;top:538px;width:76px;height:3px;background:#fdfdfd'></div><div style='position:absolute;left:1438.80px;top:535px;white-space:pre;font:normal 400 11px/11px "Liberation Sans";color:#8a8a8a;letter-spacing:0.409px;'>Element tags</div><div style='position:absolute;left:1439.2px;top:565.0px;width:11.6px;height:1.2px;background:#3d55c6'></div><div style='position:absolute;left:1439.2px;top:569.3px;width:11.6px;height:1.2px;background:#3d55c6'></div><div style='position:absolute;left:1588px;top:553.9px;width:19px;height:21px;background:#3d55c6;border-radius:4px'></div><svg style='position:absolute;left:1592.5px;top:559.9px;' width='10' height='10' viewBox='0 0 10 10'><rect x='4.25' y='1' width='1.5' height='8' fill='#fff'/><rect x='1' y='4.25' width='8' height='1.5' fill='#fff'/></svg><div style='position:absolute;left:372px;top:626px;width:1263px;height:1px;background:#ececec'></div><div style='position:absolute;left:376.5px;top:714px;width:15.5px;height:15.5px;box-sizing:border-box;border:2px solid #c8c8c8;border-radius:3px'></div><div style='position:absolute;left:682px;top:643px;width:953px;height:157px;box-sizing:border-box;border:1px solid #c9c9c9;border-radius:4px'></div><div style='position:absolute;left:691.5px;top:642px;width:99.0px;height:3px;background:#fdfdfd'></div><div style='position:absolute;left:695.40px;top:639px;white-space:pre;font:normal 400 11px/11px "Liberation Sans";color:#8a8a8a;letter-spacing:0.747px;'>Item Information</div><div style='position:absolute;left:695.40px;top:673px;white-space:pre;font:normal 400 11px/11px "Liberation Sans";color:#474e7f;letter-spacing:0.700px;'>Name:</div><div style='position:absolute;left:695.40px;top:702px;white-space:pre;font:normal 400 11px/11px "Liberation Sans";color:#474e7f;letter-spacing:0.312px;'>Duration:</div><div style='position:absolute;left:696.40px;top:730px;white-space:pre;font:normal 400 11px/11px "Liberation Sans";color:#474e7f;letter-spacing:0.625px;'>Type:</div><div style='position:absolute;left:695.40px;top:759px;white-space:pre;font:normal 400 11px/11px "Liberation Sans";color:#474e7f;letter-spacing:0.062px;'>Filesize:</div><div style='position:absolute;left:845.40px;top:673px;white-space:pre;font:normal 700 11px/11px "Liberation Sans";color:#4351c9;letter-spacing:0.178px;'>Deposits of Business ...</div><div style='position:absolute;left:845.4px;top:683.3px;width:118.1px;height:1px;background:#4351c9'></div><div style='position:absolute;left:939.50px;top:702px;white-space:pre;font:normal 700 11px/11px "Liberation Sans";color:#4351c9;letter-spacing:0.000px;'>15 sec</div><div style='position:absolute;left:939.5px;top:712.1px;width:34px;height:1px;background:#4351c9'></div><div style='position:absolute;left:879.20px;top:730px;white-space:pre;font:normal 700 11px/11px "Liberation Sans";color:#1c1c2a;letter-spacing:0.353px;'>Electronic queue</div><div style='position:absolute;left:920.30px;top:759px;white-space:pre;font:normal 700 11px/11px "Liberation Sans";color:#1c1c2a;letter-spacing:0.025px;'>13.709 KB</div><div style='position:absolute;left:1048px;top:670.0px;width:1px;height:102px;background:#e6e6e6'></div><div style='position:absolute;left:1072.60px;top:673px;white-space:pre;font:normal 400 11px/11px "Liberation Sans";color:#474e7f;letter-spacing:0.700px;'>Index:</div><div style='position:absolute;left:1073.60px;top:702px;white-space:pre;font:normal 400 11px/11px "Liberation Sans";color:#474e7f;letter-spacing:0.454px;'>Creation date:</div><div style='position:absolute;left:1073.60px;top:730px;white-space:pre;font:normal 400 11px/11px "Liberation Sans";color:#474e7f;letter-spacing:-0.033px;'>Access:</div><div style='position:absolute;left:1073.60px;top:759px;white-space:pre;font:normal 400 11px/11px "Liberation Sans";color:#474e7f;letter-spacing:0.683px;'>Author:</div><div style='position:absolute;left:1218.80px;top:702px;white-space:pre;font:normal 700 11px/11px "Liberation Sans";color:#1c1c2a;letter-spacing:0.244px;'>08.05.2025 09:14:56</div><div style='position:absolute;left:1265.70px;top:730px;white-space:pre;font:normal 700 11px/11px "Liberation Sans";color:#474e7f;letter-spacing:0.050px;'>Full access</div><div style='position:absolute;left:1262.70px;top:759px;white-space:pre;font:normal 700 11px/11px "Liberation Sans";color:#1c1c2a;letter-spacing:0.188px;'>AdminKass</div><div style='position:absolute;left:1400px;top:658.8px;width:1px;height:126px;background:#e6e6e6'></div><div style='position:absolute;left:1425px;top:659px;width:196px;height:53px;box-sizing:border-box;border:1px solid #c9c9c9;border-radius:4px'></div><div style='position:absolute;left:1435px;top:658px;width:76px;height:3px;background:#fdfdfd'></div><div style='position:absolute;left:1439.80px;top:655px;white-space:pre;font:normal 400 11px/11px "Liberation Sans";color:#8a8a8a;letter-spacing:0.436px;'>Organization</div><div style='position:absolute;left:1438.80px;top:681px;white-space:pre;font:normal 400 11px/11px "Liberation Sans";color:#4351c9;letter-spacing:0.188px;'>IT-Screen EQ team</div><div style='position:absolute;left:1439.8px;top:690.8px;width:96px;height:1px;background:#4351c9'></div><svg style='position:absolute;left:1589.5px;top:681.8px;' width='12' height='7' viewBox='0 0 12 7'><path d='M0.8 0.8 L5.8 5.6 L10.8 0.8' fill='none' stroke='#3a4070' stroke-width='1.5'/></svg><div style='position:absolute;left:1425px;top:726px;width:196px;height:56px;box-sizing:border-box;border:1px solid #c9c9c9;border-radius:4px'></div><div style='position:absolute;left:1435px;top:725px;width:76px;height:3px;background:#fdfdfd'></div><div style='position:absolute;left:1438.80px;top:722px;white-space:pre;font:normal 400 11px/11px "Liberation Sans";color:#8a8a8a;letter-spacing:0.409px;'>Element tags</div><div style='position:absolute;left:1439px;top:740.8px;width:126px;height:24.5px;background:#ececec'></div><div style='position:absolute;left:1450.20px;top:748px;white-space:pre;font:normal 400 12px/12px "Liberation Sans";color:#474e7f;letter-spacing:0.089px;'>#Deposits of Busines</div><div style='position:absolute;left:1439px;top:765.8px;width:78px;height:2.3px;background:#363d6e;border-radius:1px'></div><div style='position:absolute;left:1588px;top:743.6999999999999px;width:19px;height:21.2px;background:#3d55c6;border-radius:4px'></div><svg style='position:absolute;left:1592.5px;top:749.8px;' width='10' height='10' viewBox='0 0 10 10'><rect x='4.25' y='1' width='1.5' height='8' fill='#fff'/><rect x='1' y='4.25' width='8' height='1.5' fill='#fff'/></svg><div style='position:absolute;left:372px;top:816px;width:1263px;height:1px;background:#ececec'></div><div style='position:absolute;left:376.5px;top:904px;width:15.5px;height:15.5px;box-sizing:border-box;border:2px solid #c8c8c8;border-radius:3px'></div><div style='position:absolute;left:682px;top:833px;width:953px;height:157px;box-sizing:border-box;border:1px solid #c9c9c9;border-radius:4px'></div><div style='position:absolute;left:691.5px;top:832px;width:99.0px;height:3px;background:#fdfdfd'></div><div style='position:absolute;left:695.40px;top:830px;white-space:pre;font:normal 400 11px/11px "Liberation Sans";color:#8a8a8a;letter-spacing:0.747px;'>Item Information</div><div style='position:absolute;left:695.40px;top:864px;white-space:pre;font:normal 400 11px/11px "Liberation Sans";color:#474e7f;letter-spacing:0.700px;'>Name:</div><div style='position:absolute;left:695.40px;top:892px;white-space:pre;font:normal 400 11px/11px "Liberation Sans";color:#474e7f;letter-spacing:0.312px;'>Duration:</div><div style='position:absolute;left:696.40px;top:920px;white-space:pre;font:normal 400 11px/11px "Liberation Sans";color:#474e7f;letter-spacing:0.625px;'>Type:</div><div style='position:absolute;left:695.40px;top:949px;white-space:pre;font:normal 400 11px/11px "Liberation Sans";color:#474e7f;letter-spacing:0.062px;'>Filesize:</div><div style='position:absolute;left:845.40px;top:864px;white-space:pre;font:normal 700 11px/11px "Liberation Sans";color:#4351c9;letter-spacing:0.178px;'>Deposits of Business ...</div><div style='position:absolute;left:845.4px;top:873.5999999999999px;width:118.1px;height:1px;background:#4351c9'></div><div style='position:absolute;left:939.50px;top:892px;white-space:pre;font:normal 700 11px/11px "Liberation Sans";color:#4351c9;letter-spacing:0.000px;'>15 sec</div><div style='position:absolute;left:939.5px;top:902.4px;width:34px;height:1px;background:#4351c9'></div><div style='position:absolute;left:939.00px;top:920px;white-space:pre;font:normal 700 11px/11px "Liberation Sans";color:#1c1c2a;letter-spacing:0.625px;'>Image</div><div style='position:absolute;left:1048px;top:860.3px;width:1px;height:102px;background:#e6e6e6'></div><div style='position:absolute;left:1072.60px;top:864px;white-space:pre;font:normal 400 11px/11px "Liberation Sans";color:#474e7f;letter-spacing:0.455px;'>Resolutions:</div><div style='position:absolute;left:1073.60px;top:892px;white-space:pre;font:normal 400 11px/11px "Liberation Sans";color:#474e7f;letter-spacing:0.454px;'>Creation date:</div><div style='position:absolute;left:1073.60px;top:920px;white-space:pre;font:normal 400 11px/11px "Liberation Sans";color:#474e7f;letter-spacing:-0.033px;'>Access:</div><div style='position:absolute;left:1073.60px;top:949px;white-space:pre;font:normal 400 11px/11px "Liberation Sans";color:#474e7f;letter-spacing:0.683px;'>Author:</div><div style='position:absolute;left:1273.80px;top:864px;white-space:pre;font:normal 700 11px/11px "Liberation Sans";color:#1c1c2a;letter-spacing:0.300px;'>512 x 512</div><div style='position:absolute;left:1218.80px;top:892px;white-space:pre;font:normal 700 11px/11px "Liberation Sans";color:#1c1c2a;letter-spacing:0.244px;'>08.05.2025 08:58:39</div><div style='position:absolute;left:1265.70px;top:920px;white-space:pre;font:normal 700 11px/11px "Liberation Sans";color:#474e7f;letter-spacing:0.050px;'>Full access</div><div style='position:absolute;left:1400px;top:850.0px;width:1px;height:126px;background:#e6e6e6'></div><div style='position:absolute;left:1425px;top:850px;width:196px;height:53px;box-sizing:border-box;border:1px solid #c9c9c9;border-radius:4px'></div><div style='position:absolute;left:1435px;top:849px;width:76px;height:3px;background:#fdfdfd'></div><div style='position:absolute;left:1439.80px;top:847px;white-space:pre;font:normal 400 11px/11px "Liberation Sans";color:#8a8a8a;letter-spacing:0.436px;'>Organization</div><div style='position:absolute;left:1438.80px;top:873px;white-space:pre;font:normal 400 11px/11px "Liberation Sans";color:#4351c9;letter-spacing:0.188px;'>IT-Screen EQ team</div><div style='position:absolute;left:1439.8px;top:882.0px;width:96px;height:1px;background:#4351c9'></div><svg style='position:absolute;left:1589.5px;top:873.0px;' width='12' height='7' viewBox='0 0 12 7'><path d='M0.8 0.8 L5.8 5.6 L10.8 0.8' fill='none' stroke='#3a4070' stroke-width='1.5'/></svg><div style='position:absolute;left:1425px;top:917px;width:196px;height:56px;box-sizing:border-box;border:1px solid #c9c9c9;border-radius:4px'></div><div style='position:absolute;left:1435px;top:916px;width:76px;height:3px;background:#fdfdfd'></div><div style='position:absolute;left:1438.80px;top:913px;white-space:pre;font:normal 400 11px/11px "Liberation Sans";color:#8a8a8a;letter-spacing:0.409px;'>Element tags</div><div style='position:absolute;left:1439px;top:932.0px;width:50px;height:24.5px;background:#ececec'></div><div style='position:absolute;left:1450.20px;top:939px;white-space:pre;font:normal 400 12px/12px "Liberation Sans";color:#474e7f;letter-spacing:0.089px;'>#Deposits of Busines</div><div style='position:absolute;left:1439px;top:957.0px;width:78px;height:2.3px;background:#363d6e;border-radius:1px'></div><div style='position:absolute;left:1588px;top:934.9px;width:19px;height:21.2px;background:#3d55c6;border-radius:4px'></div><svg style='position:absolute;left:1592.5px;top:941.0px;' width='10' height='10' viewBox='0 0 10 10'><rect x='4.25' y='1' width='1.5' height='8' fill='#fff'/><rect x='1' y='4.25' width='8' height='1.5' fill='#fff'/></svg></div>
<div id="frame"></div></div></body></html>
